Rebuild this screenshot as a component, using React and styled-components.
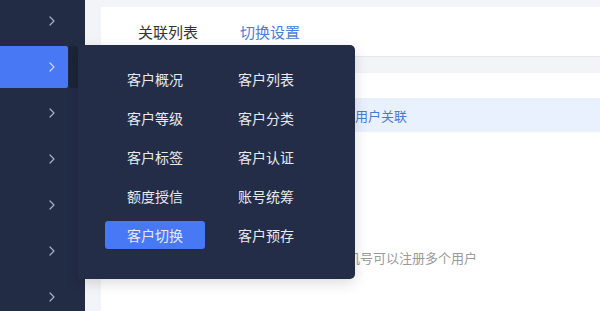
import React from "react";
import styled, { createGlobalStyle } from "styled-components";

const Global = createGlobalStyle`
  html, body { margin: 0; padding: 0; background: #f3f4f7; }
  body { font-family: "Noto Sans CJK SC", "Noto Sans", sans-serif; }
  * { box-sizing: border-box; }
`;

const Root = styled.div`
  position: relative;
  width: 600px;
  height: 311px;
  display: flex;
  overflow: hidden;
`;

const Sidebar = styled.nav`
  width: 85px;
  flex: none;
  background: #232c45;
  display: flex;
  flex-direction: column;
  gap: 4px;
`;

const NavItem = styled.div`
  position: relative;
  height: 42px;
  width: 68px;
  flex: none;
  display: flex;
  align-items: center;
  justify-content: flex-end;
  padding-right: 13px;
  color: ${(p) => (p.$active ? "#c9d6ff" : "#aab0be")};
  background: ${(p) => (p.$active ? "#4878f4" : "transparent")};
  border-radius: 0 2px 2px 0;
  &::after {
    content: "";
    display: ${(p) => (p.$active ? "block" : "none")};
    position: absolute;
    left: 69px;
    top: 0;
    width: 10px;
    height: 100%;
    background: #1c2439;
  }
`;

const Main = styled.main`
  flex: 1;
  display: flex;
  flex-direction: column;
  gap: 16px;
  padding: 7px 0 0 16px;
  background: #f3f4f7;
`;

const TabBar = styled.div`
  height: 50px;
  flex: none;
  background: #fff;
  border-bottom: 1px solid #e6e7ea;
  display: flex;
  align-items: stretch;
  gap: 42px;
  padding-left: 37px;
`;

const Tab = styled.div`
  display: flex;
  align-items: center;
  font-size: 15px;
  color: ${(p) => (p.$active ? "#4d7dd8" : "#333")};
  border-bottom: 2px solid ${(p) => (p.$active ? "#4d7dd8" : "transparent")};
  padding-top: 2px;
`;

const Card = styled.section`
  flex: 1;
  background: #fff;
  padding: 25px 0 0 16px;
  display: flex;
  flex-direction: column;
`;

const InfoRow = styled.div`
  height: 34px;
  display: flex;
  align-items: center;
  padding-left: 238px;
  background: #eaf1fe;
  font-size: 13px;
  color: #4a7ad4;
`;

const Hint = styled.div`
  margin-top: 117px;
  padding-left: 191px;
  font-size: 13px;
  color: #9a9a9a;
  line-height: 18px;
`;

const Popup = styled.div`
  position: absolute;
  left: 78px;
  top: 45px;
  width: 277px;
  height: 234px;
  background: #242d47;
  border-radius: 0 5px 5px 0;
  box-shadow: 0 4px 14px rgba(0, 0, 0, 0.14);
  padding: 20px 39px 30px 27px;
  display: grid;
  grid-template-columns: 100px 100px;
  grid-auto-rows: 28px;
  column-gap: 11px;
  row-gap: 11px;
  align-content: start;
`;

const MenuCell = styled.div`
  display: flex;
  align-items: center;
  justify-content: center;
  font-size: 14px;
  color: #e8eaef;
  border-radius: 3px;
  background: ${(p) => (p.$active ? "#4878f4" : "transparent")};
  cursor: pointer;
`;

const Chevron = () => (
  <svg width="6" height="10" viewBox="0 0 6 10" fill="none">
    <polyline points="1,1 5,5 1,9" stroke="currentColor" strokeWidth="1.2" strokeLinecap="round" strokeLinejoin="round" />
  </svg>
);

const menu = [
  "客户概况", "客户列表",
  "客户等级", "客户分类",
  "客户标签", "客户认证",
  "额度授信", "账号统筹",
  "客户切换", "客户预存",
];

export default function App() {
  return (
    <Root>
      <Global />
      <Sidebar>
        {Array.from({ length: 7 }).map((_, i) => (
          <NavItem key={i} $active={i === 1}>
            <Chevron />
          </NavItem>
        ))}
      </Sidebar>
      <Main>
        <TabBar>
          <Tab>关联列表</Tab>
          <Tab $active>切换设置</Tab>
        </TabBar>
        <Card>
          <InfoRow>用户关联</InfoRow>
          <Hint>同一手机号可以注册多个用户</Hint>
        </Card>
      </Main>
      <Popup>
        {menu.map((m) => (
          <MenuCell key={m} $active={m === "客户切换"}>{m}</MenuCell>
        ))}
      </Popup>
    </Root>
  );
}
